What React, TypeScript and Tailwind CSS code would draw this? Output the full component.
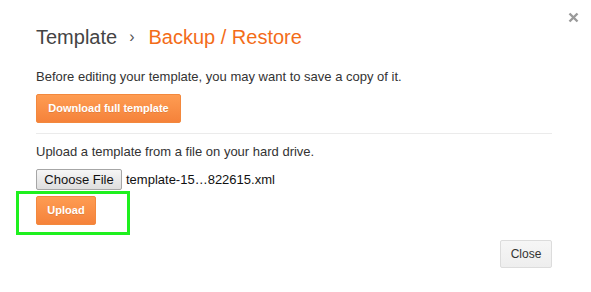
export default function App() {
  return (
    <div className="relative w-[591px] h-[292px] overflow-hidden bg-white font-['Liberation_Sans',Arial,sans-serif] text-[#333]">
      {/* close x */}
      <button className="absolute left-[566px] top-[10px] w-[15px] h-[15px] flex items-center justify-center">
        <svg width="11" height="11" viewBox="0 0 11 11">
          <path d="M1.5 1.5 L9.5 9.5 M9.5 1.5 L1.5 9.5" stroke="#9a9a9a" strokeWidth="2.4" />
        </svg>
      </button>

      <div className="pl-[36px] pr-[39px] pt-[25px]">
        <h1 className="flex items-center h-[24px] text-[20px] leading-[24px] font-normal">
          <span className="text-[#444]">Template</span>
          <span className="ml-[12px] mr-[14px] text-[16px] text-[#555]">›</span>
          <span className="text-[#f36c18]">Backup / Restore</span>
        </h1>

        <p className="mt-[20px] text-[13px] leading-[16px] text-[#333]">
          Before editing your template, you may want to save a copy of it.
        </p>
        <button className="mt-[9px] w-[145px] h-[29px] rounded-[2px] border border-[#f3883d] bg-gradient-to-b from-[#fe9c52] to-[#f5823a] text-[11px] font-bold text-white [text-shadow:0_1px_0_rgba(0,0,0,0.1)]">
          Download full template
        </button>

        <div className="mt-[10px] border-t border-[#ebebeb]" />

        <p className="mt-[10px] text-[13px] leading-[16px] text-[#333]">
          Upload a template from a file on your hard drive.
        </p>
        <div className="mt-[9px] flex items-center h-[21px]">
          <span className="h-[21px] w-[86px] flex items-center justify-center rounded-[2px] border border-[#a6a6a6] bg-gradient-to-b from-[#f6f6f6] to-[#dedede] text-[13px] text-[#111]">
            Choose File
          </span>
          <span className="ml-[4px] text-[13px] text-[#111]">template-15…822615.xml</span>
        </div>
        <button className="mt-[6px] w-[60px] h-[29px] rounded-[2px] border border-[#f3883d] bg-gradient-to-b from-[#fe9c52] to-[#f5823a] text-[11px] font-bold text-white [text-shadow:0_1px_0_rgba(0,0,0,0.1)]">
          Upload
        </button>

        <div className="mt-[15px] flex justify-end">
          <button className="w-[52px] h-[28px] rounded-[2px] border border-[#dcdcdc] bg-gradient-to-b from-[#f6f6f6] to-[#eeeeee] text-[12px] text-[#333]">
            Close
          </button>
        </div>
      </div>

      {/* highlight annotation */}
      <div className="absolute left-[16px] top-[191px] w-[114px] h-[44px] border-[3px] border-[#1ef01e]" />
    </div>
  )
}
